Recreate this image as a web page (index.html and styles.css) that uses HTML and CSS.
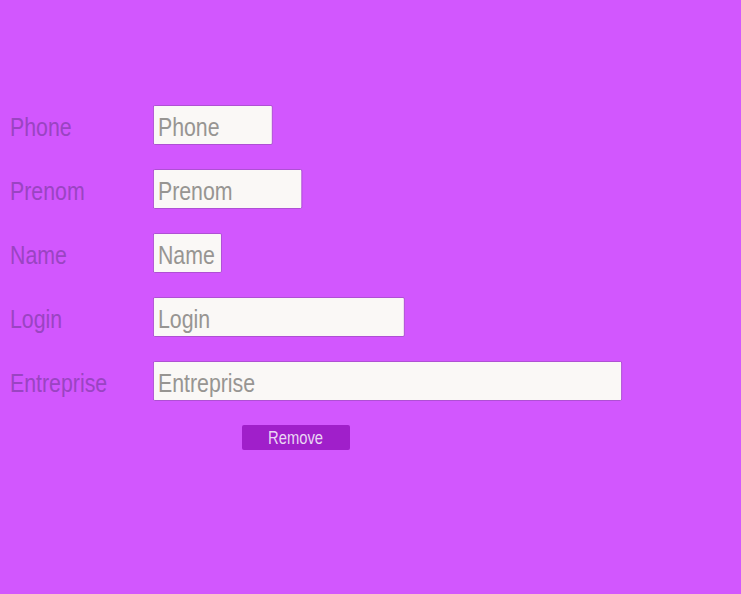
FILE: index.html
```html
<!DOCTYPE html>
<html>
<head>
<meta charset="utf-8">
<link rel="stylesheet" href="styles.css">
</head>
<body>
<form class="form">
  <div class="row"><label class="label"><span class="narrow">Phone</span></label><input class="field w-phone" placeholder="Phone"></div>
  <div class="row"><label class="label"><span class="narrow">Prenom</span></label><input class="field w-prenom" placeholder="Prenom"></div>
  <div class="row"><label class="label"><span class="narrow">Name</span></label><input class="field w-name" placeholder="Name"></div>
  <div class="row"><label class="label"><span class="narrow">Login</span></label><input class="field w-login" placeholder="Login"></div>
  <div class="row"><label class="label"><span class="narrow">Entreprise</span></label><input class="field w-entreprise" placeholder="Entreprise"></div>
  <div class="actions"><button type="button" class="btn"><span class="narrow btn-text">Remove</span></button></div>
</form>
</body>
</html>
```
FILE: styles.css
```css
html, body {
  margin: 0;
  padding: 0;
  background: #d257fe;
  height: 100%;
}
body {
  font-family: "Liberation Sans", Arial, sans-serif;
}
.form {
  display: flex;
  flex-direction: column;
  gap: 24px;
  padding: 105px 0 0 10px;
}
.row {
  display: flex;
  align-items: center;
  height: 40px;
}
.label {
  flex: none;
  width: 143px;
  font-size: 26px;
  line-height: 40px;
  padding-top: 3px;
  color: #9a44c2;
}
.narrow {
  display: inline-block;
  transform: scaleX(0.82);
  transform-origin: left center;
}
.field {
  flex: none;
  box-sizing: border-box;
  height: 40px;
  margin: 0;
  padding: 4px 0 0 5px;
  border-style: solid;
  border-color: #a947cf;
  border-width: 1px 1.22px;
  border-radius: 2px;
  background: #faf8f6;
  font-family: inherit;
  font-size: 26px;
  color: #555;
  outline: none;
  transform: scaleX(0.82);
  transform-origin: left center;
}
.field::placeholder {
  color: #979592;
}
.w-phone { width: 146px; }
.w-prenom { width: 182px; }
.w-name { width: 84px; }
.w-login { width: 307px; }
.w-entreprise { width: 572px; }
.actions {
  padding-left: 232px;
}
.btn {
  width: 108px;
  height: 25px;
  margin: 0;
  padding: 2px 0 0;
  border: none;
  border-radius: 2px;
  background: #a01fca;
  color: #ead6f4;
  font-family: inherit;
  font-size: 18px;
  text-align: center;
}
.btn-text {
  transform-origin: center center;
}
```
